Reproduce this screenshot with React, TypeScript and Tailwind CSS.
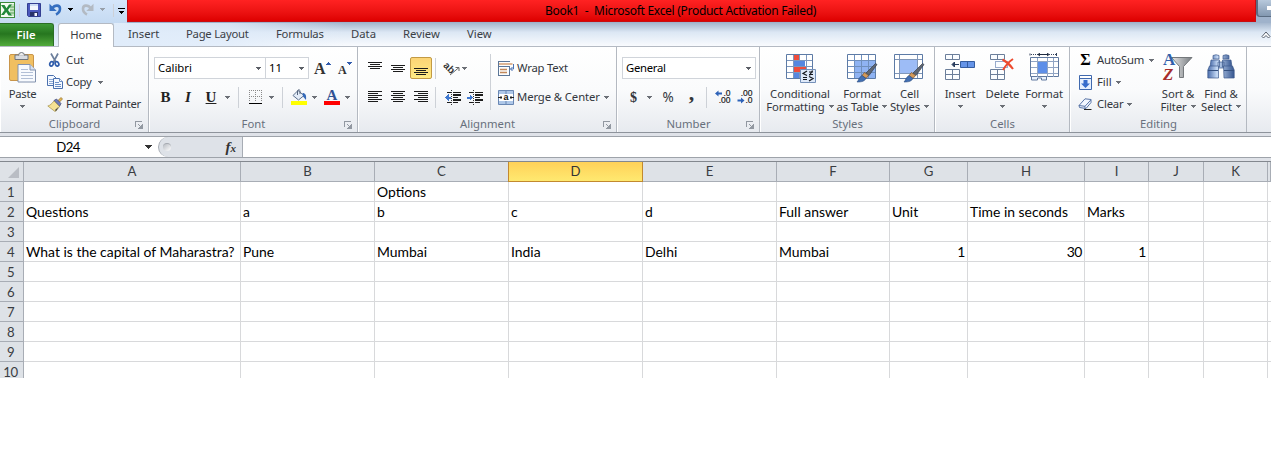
import React from "react";

type Box = { c?: string; children?: React.ReactNode };

function Arrow({ c = "" }: { c?: string }) {
  return (
    <svg className={`h-[3px] w-[5px] shrink-0 ${c}`} viewBox="0 0 5 3" fill="currentColor" shapeRendering="crispEdges">
      <path d="M0 0h5v1H4v1H3v1H2V2H1V1H0z" />
    </svg>
  );
}

function Launcher() {
  return (
    <svg className="h-2 w-2" viewBox="0 0 8 8" fill="none" stroke="#9298a1" shapeRendering="crispEdges">
      <path d="M.5 6V.5H7M3 3l3 3M7.5 3v4.5H3M6.500 4v3M4 6.500h3" />
    </svg>
  );
}

function Group({ w, label, launcher, children }: { w: string; label: string; launcher?: boolean; children: React.ReactNode }) {
  return (
    <section className={`flex h-[85px] shrink-0 flex-col border-r border-[#b4b9c1] ${w}`}>
      <div className="flex h-[69px] shrink-0 border-l border-white">{children}</div>
      <div className="grid h-4 grid-cols-[16px_1fr_16px] items-center border-l border-white text-[#68707c]">
        <span />
        <span className="text-center leading-4">{label}</span>
        <span className="flex items-center justify-center pt-px pr-[2px]">{launcher && <Launcher />}</span>
      </div>
    </section>
  );
}

function Sep({ c = "h-[21px]" }: { c?: string }) {
  return <span className={`w-px shrink-0 bg-[#cdd1d7] ${c}`} />;
}

function Big({ c, icon, lines, below }: { c: string; icon: React.ReactNode; lines: string[]; below?: boolean }) {
  return (
    <div className={`flex shrink-0 flex-col items-center pt-[7px] tracking-[-0.1px] whitespace-nowrap ${c}`}>
      <div className="flex h-[33px] items-start">{icon}</div>
      {lines.map((l, i) => (
        <div key={l} className="flex h-[13px] items-center leading-[13px]">
          {l}
          {!below && i === lines.length - 1 && <Arrow c="ml-1 text-[#6b6f76]" />}
        </div>
      ))}
      {below && <Arrow c="mt-[5px] text-[#6b6f76]" />}
    </div>
  );
}

function Slot({ c, children }: Box) {
  return <span className={`flex shrink-0 items-center justify-center ${c}`}>{children}</span>;
}

function Lines({ rows }: { rows: [number, number][] }) {
  return (
    <svg className="h-[14px] w-[15px]" viewBox="0 0 15 14" fill="#1c1c1c" shapeRendering="crispEdges">
      {rows.map(([x, w], i) => (
        <rect key={i} x={x} y={i * 2 + (rows.length > 5 ? 1 : 4)} width={w} height="1" />
      ))}
    </svg>
  );
}

const ExcelIcon = () => (
  <svg className="h-4 w-[15px]" viewBox="0 0 15 16">
    <rect x=".5" y=".5" width="14" height="15" fill="#f5fbf3" stroke="#3c8a3c" />
    <path d="M10 2h4v12h-4z" fill="#c8e3c5" />
    <path d="M10 5h4M10 8h4M10 11h4" stroke="#5ba55b" />
    <path d="M1 3h3.500l2 3.300L9 2.500h3L8 8l4 5.500H8.500L6.200 10 4 13H1l3.600-5z" fill="#21883a" />
  </svg>
);

const SaveIcon = () => (
  <svg className="h-[14px] w-[14px]" viewBox="0 0 14 14">
    <path d="M.5.500h13v13h-12l-1-1z" fill="#4b58bd" stroke="#333e91" />
    <path d="M3 1h8v6H3z" fill="#f2f6fd" />
    <path d="M3 1h8v2H3z" fill="#cddcf3" />
    <path d="M3 9h8v4H3z" fill="#283269" />
    <path d="M7.500 10h2.500v3H7.500z" fill="#f5f5ff" />
  </svg>
);

const UndoIcon = ({ c }: { c: string }) => (
  <svg className={`h-[13px] w-[13px] ${c}`} viewBox="0 0 13 13" fill="none" stroke="currentColor">
    <path d="M3 5.500C6 1.500 11 1.800 11 5.800c0 2.500-1.500 4.500-4 5.700" strokeWidth="2.600" />
    <path d="M.5.800v7.200h7.200z" fill="currentColor" stroke="none" />
  </svg>
);

const PasteIcon = () => (
  <svg className="-mt-[2px] h-[31px] w-[28px]" viewBox="0 0 28 31">
    <rect x=".5" y="2.500" width="24" height="26" rx="1.500" fill="#f0bf61" stroke="#c9954a" />
    <path d="M6 3h13v4.500H6z" fill="#d8dbe0" stroke="#6f747c" />
    <path d="M9.500 3.500a3 3 0 0 1 6 0" fill="#eee" stroke="#6f747c" />
    <path d="M9 12.500h12l5.500 5.500v12H9z" fill="#f7fafe" stroke="#8292ae" />
    <path d="M21 12.500v5.500h5.500" fill="#d5e0f1" stroke="#8292ae" />
    <path d="M12 17.500h7M12 20.500h12M12 23.500h12M12 26.500h12" stroke="#b1bfd6" />
  </svg>
);

const CutIcon = () => (
  <svg className="h-4 w-4" viewBox="0 0 16 16" fill="none">
    <path d="M4 1.500l4.800 8.500M11 1.500L6.500 10" stroke="#6c7f9c" strokeWidth="1.700" />
    <ellipse cx="4.500" cy="11.800" rx="1.700" ry="2.300" stroke="#2f5cab" strokeWidth="1.700" transform="rotate(25 4.500 11.800)" />
    <ellipse cx="10" cy="11.800" rx="1.700" ry="2.300" stroke="#2f5cab" strokeWidth="1.700" transform="rotate(-25 10 11.800)" />
  </svg>
);

const CopyIcon = () => (
  <svg className="h-[14px] w-4" viewBox="0 0 16 14" fill="#f5f9ff" stroke="#4a70ae">
    <path d="M.5.500h6l3 3v7h-9z" />
    <path d="M2 4.500h4M2 6.500h4M2 8.500h4" stroke="#8ca8d4" />
    <path d="M6.500 3.500h6l3 3v7h-9z" />
    <path d="M12.500 3.500v3h3M8 7.500h4M8 9.500h6M8 11.500h6" stroke="#6c8fc6" />
  </svg>
);

const BrushIcon = () => (
  <svg className="h-[15px] w-4" viewBox="0 0 16 15">
    <path d="M10.500 4L14 .500l1.500 1.500L12 5.500z" fill="#e9b84c" stroke="#8a6a2d" strokeWidth=".7" />
    <path d="M7 3.500l2.500-1.500 4.500 4.500-1.500 3z" fill="#6e7bb8" stroke="#3f466f" strokeWidth=".7" />
    <path d="M7 4l5.500 5.500C11 11.500 9.500 14 8 14.500L.8 9C3 8.500 5 6.500 7 4z" fill="#f5e294" stroke="#a28f4c" strokeWidth=".7" />
    <path d="M9 14.300l2.700-4.500L8 13z" fill="#444" />
  </svg>
);

const BorderIcon = () => (
  <svg className="h-[14px] w-[13px]" viewBox="0 0 13 14" fill="none" shapeRendering="crispEdges">
    <path d="M0 .5h13M0 6.500h13M.5 0v12M6.500 0v12M12.500 0v12" stroke="#8a8a8a" strokeDasharray="1 1" />
    <path d="M0 13h13" stroke="#000" strokeWidth="1" />
  </svg>
);

const FillIcon = () => (
  <svg className="h-4 w-4" viewBox="0 0 16 16">
    <path d="M7 1.500l6 5L7.500 11 2 6.500z" fill="#e3ecf8" stroke="#5e718e" />
    <path d="M6.500 6V1.500a1.500 1.500 0 0 1 2.500 0V5" fill="none" stroke="#56657d" />
    <path d="M11.500 4c3 0 4 2 3.500 7l-3-3.500z" fill="#3569b8" />
    <path d="M0 12h16v4H0z" fill="#ff0" />
  </svg>
);

const OrientIcon = () => (
  <svg className="h-[15px] w-[15px] overflow-visible" viewBox="0 0 15 15">
    <text x="-1" y="8" fontSize="10" fontWeight="700" fill="#333" fontFamily="Liberation Sans" transform="rotate(45 2 5)">ab</text>
    <path d="M5 14l9-7.500M14 10V6.500h-3.500" fill="none" stroke="#666" />
  </svg>
);

const IndentIcon = ({ out }: { out?: boolean }) => (
  <svg className="h-[15px] w-4" viewBox="0 0 16 15" shapeRendering="crispEdges">
    <path d="M2 2.500h4M8 2.500h8M2 12.500h4M8 12.500h5" stroke="#1c1c1c" />
    <path d="M8 5h8M8 7.500h5M8 10h8" stroke="#1c1c1c" strokeWidth="1.500" />
    <path d="M6.500 0v15" stroke="#333" strokeDasharray="1 1" />
    {out ? <path d="M0 7.500L3.500 4v2.500H6v2H3.500V11z" fill="#3f78cf" /> : <path d="M6 7.500L2.500 4v2.500H0v2h2.500V11z" fill="#3f78cf" />}
  </svg>
);

const WrapIcon = () => (
  <svg className="h-[15px] w-4" viewBox="0 0 16 15" fill="none" stroke="#5c7698">
    <path d="M0 .5h12M0 5.500h12M0 14.500h12M.5 0v15M11.500 5v10" />
    <path d="M1 3h13.500" stroke="#c2702e" />
    <path d="M2 8.500h7M2 11.500h7" stroke="#c2885a" strokeWidth="1.500" />
    <path d="M15.500 3v5h-3M14.500 6l-2 2 2 2" stroke="#4a72b2" />
  </svg>
);

const MergeIcon = () => (
  <svg className="h-[15px] w-4 overflow-visible" viewBox="0 0 16 15">
    <path d="M.5.500h15v14H.5z" fill="#aec7e8" stroke="#6987b3" />
    <path d="M8 0v15" stroke="#6987b3" />
    <path d="M1 4h14v7H1z" fill="#fff" />
    <path d="M0 7.500h4M12 7.500h4M3 6v3M13 6v3" stroke="#222" />
    <text x="8" y="10" textAnchor="middle" fontSize="9" fontWeight="700" fontFamily="Liberation Sans" fill="#111">a</text>
  </svg>
);

const DecimalIcon = ({ more }: { more?: boolean }) => (
  <svg className="h-[14px] w-4 overflow-visible" viewBox="0 0 16 14" fontFamily="Liberation Sans" fontSize="8.500" fill="#222">
    <text x="15.500" y="6" textAnchor="end" stroke="#222" strokeWidth=".2">{more ? ".0" : ".00"}</text>
    <text x="15.500" y="13" textAnchor="end" stroke="#222" strokeWidth=".2">{more ? ".00" : ".0"}</text>
    {more ? <path d="M0 3.500L3.500.500v2H7v2H3.500v2z" fill="#2d62b8" /> : <path d="M7.500 10.500L4 7.500v2H.5v2H4v2z" fill="#2d62b8" />}
  </svg>
);

const CondIcon = () => (
  <svg className="h-[29px] w-[31px]" viewBox="0 0 31 29">
    <path d="M1.500.500h26v24h-26z" fill="#fff" stroke="#5d7ba6" />
    <path d="M8 1h7v5H8zM8 13h13v5H8z" fill="#ee4d3c" />
    <path d="M8 7h12v5H8zM8 19h7v5H8z" fill="#5687e0" />
    <path d="M2 6.500h25M2 12.500h25M2 18.500h25M8.500 1v23M14.500 1v5M14.500 18v6M21.500 1v23" stroke="#7d97bd" />
    <path d="M15.500 15.500h15v13h-15z" fill="#dfeafa" stroke="#7590b8" />
    <path d="M22 17l-4 2.500 4 2M18 23.500h4M18 25.500h4M24 18h4M24 20.500h4M27.500 16.500l-3 5M24 22.500l4 2-4 2.500" fill="none" stroke="#15181d" strokeWidth="1.200" />
  </svg>
);

const Paintbrush = () => (
  <g>
    <path d="M28.500 9.500l1.500 1-8 11-3-2.500z" fill="#5e6673" stroke="#3a414c" strokeWidth=".7" />
    <path d="M17.500 18.500l4 3-2.500 3-4-3z" fill="#d49a5a" stroke="#76502a" strokeWidth=".7" />
    <path d="M15 21.500l4 3c-2 3.500-6 3.500-9 3.500 2-2 2-5 5-6.500z" fill="#426fb2" stroke="#2c4c80" strokeWidth=".6" />
  </g>
);

const TableIcon = () => (
  <svg className="h-[29px] w-[31px]" viewBox="0 0 31 29">
    <path d="M.5.500h28v24H.5z" fill="#fff" stroke="#5d7ba6" />
    <path d="M8 6h20v18H8z" fill="#8fb3f3" />
    <path d="M1 6.500h27M1 12.500h27M1 18.500h27M7.500 1v23M14.500 1v23M21.500 1v23" stroke="#6f8fbd" />
    <Paintbrush />
  </svg>
);

const CellStyleIcon = () => (
  <svg className="h-[29px] w-[31px]" viewBox="0 0 31 29">
    <path d="M.5.500h28v24H.5z" fill="#fff" stroke="#5d7ba6" />
    <path d="M6 6h18v13H6z" fill="#9dbcf6" />
    <path d="M1 5.500h27M1 19.500h27M5.500 1v23M23.500 1v23" stroke="#8096b8" />
    <Paintbrush />
  </svg>
);

const InsertIcon = () => (
  <svg className="h-[27px] w-[31px]" viewBox="0 0 31 27" fill="#fbfdff" stroke="#6b7e9a">
    <path d="M.5.500h14v5H.5zM7.500.500v5M.5 15.500h14v10H.5zM7.500 15.500v10M.5 20.500h14" />
    <path d="M15.500 7.500h14v6h-14z" fill="#6594e8" stroke="#355d9f" />
    <path d="M22.500 7.500v6" stroke="#355d9f" />
    <path d="M14 10.500H8M9.500 8L7 10.500 9.500 13z" fill="#293d5e" stroke="#293d5e" />
  </svg>
);

const DeleteIcon = () => (
  <svg className="h-[27px] w-[25px]" viewBox="0 0 25 27" fill="#fbfdff" stroke="#6b7e9a">
    <path d="M.5.500h14v5H.5zM7.500.500v5M.5 15.500h14v10H.5zM7.500 15.500v10M.5 20.500h14" />
    <path d="M5.500 7.500h12v6h-12z" stroke="#34589b" strokeDasharray="1 1" />
    <path d="M12.500 5.500Q19 9 23 15M23 5Q17 9 13 16" fill="none" stroke="#ed4a2e" strokeWidth="2" />
  </svg>
);

const FormatIcon = () => (
  <svg className="-mt-px h-[29px] w-[31px]" viewBox="0 0 31 29" fill="none">
    <path d="M1.500 4.500h28v19h-28z" fill="#fff" stroke="#60799f" />
    <path d="M9 9h9v11H9z" fill="#5e8fe8" />
    <path d="M2 8.500h27M2 20.500h27M8.500 5v19M18.500 5v19M24.500 5v19M2 14.500h7M18 14.500h11" stroke="#91a5c4" />
    <path d="M1 .500v2M27.500 0v3" stroke="#34435c" />
    <path d="M2 1.500h7M20 1.500h7" stroke="#34435c" strokeDasharray="1 1" />
    <path d="M9 1.500h10M11 0L9 1.500 11 3M18 0l2 1.500L18 3" stroke="#1e2b40" />
    <path d="M2.500 24v3h6v-2h4v2h5v-3" fill="#e9f1fc" stroke="#60799f" />
  </svg>
);

const DownIcon = () => (
  <svg className="h-[15px] w-[13px]" viewBox="0 0 13 15">
    <path d="M.5.500h12v14H.5z" fill="#e5effd" stroke="#4069ae" />
    <path d="M1 1h11v3H1z" fill="#fff" />
    <path d="M1 3.500h11" stroke="#4069ae" />
    <path d="M4.500 5h4v3.500H11L6.500 13 2 8.500h2.500z" fill="#366ccb" />
  </svg>
);

const EraserIcon = () => (
  <svg className="h-3 w-[14px]" viewBox="0 0 14 12">
    <path d="M1 7.500L7 .800l6 .7v3L8 10.500 1.500 9.500z" fill="#f3f7ff" stroke="#5874a6" />
    <path d="M1 7.500l6 .800 6-6.500M7 8.300v2" fill="none" stroke="#5874a6" />
    <path d="M6 11.500h7.500" stroke="#222" />
  </svg>
);

const SortIcon = () => (
  <svg className="-mt-[2px] h-[29px] w-[30px] overflow-visible" viewBox="0 0 30 29">
    <defs>
      <linearGradient id="funnel"><stop stopColor="#e6e6e6" /><stop offset="1" stopColor="#777c81" /></linearGradient>
    </defs>
    <path d="M8.500 5.500h20.500l-8.500 9v11h-4v-11z" fill="url(#funnel)" stroke="#74787c" />
    <text x="0" y="13" fontSize="17" fontWeight="700" fontFamily="Liberation Serif" fill="#315faa">A</text>
    <text x="0" y="28" fontSize="17" fontWeight="700" fontStyle="italic" fontFamily="Liberation Serif" fill="#a62c2c">Z</text>
  </svg>
);

const BinocularsIcon = () => (
  <svg className="h-[26px] w-[28px]" viewBox="0 0 28 26">
    <defs>
      <linearGradient id="lens"><stop stopColor="#4a6dab" /><stop offset=".35" stopColor="#c7dbf6" /><stop offset="1" stopColor="#35558f" /></linearGradient>
    </defs>
    <g fill="url(#lens)" stroke="#3d5a8c" strokeWidth=".7">
      <path d="M6 1.500Q9 0 12 1.500V5H6zM16 1.500Q19 0 22 1.500V5h-6zM4 6h8.500v7H3zM15.500 6H24l1 7h-9.500zM11 8h6v6h-6z" />
      <path d="M2.500 12h9v12H.8v-8zM16.500 12h9l1.700 4v8H17z" />
    </g>
    <path d="M1 16.500h10M17 16.500h10" stroke="#34507f" />
  </svg>
);

const TABS = [
  { t: "Insert", c: "ml-[14px] w-[58px]" },
  { t: "Page Layout", c: "w-[90px] tracking-[-0.25px]" },
  { t: "Formulas", c: "w-[75px] tracking-[-0.25px]" },
  { t: "Data", c: "w-[52px]" },
  { t: "Review", c: "w-[64px]" },
  { t: "View", c: "w-[40px]" },
];

const COLS = ["A", "B", "C", "D", "E", "F", "G", "H", "I", "J", "K", ""];
const GRID = "grid w-[1271px] grid-cols-[24px_217px_134px_134px_134px_134px_113px_78px_117px_64px_55px_64px_3px]";
const ROWS: string[][] = [
  ["", "", "Options"],
  ["Questions", "a", "b", "c", "d", "Full answer", "Unit", "Time in seconds", "Marks"],
  [],
  ["What is the capital of Maharastra?", "Pune", "Mumbai", "India", "Delhi", "Mumbai", "1", "30", "1"],
  [], [], [], [], [], [],
];

function TitleBar() {
  return (
    <header className="flex h-[23px] bg-[#9fb2cb]">
      <div className="flex w-[127px] shrink-0 items-start bg-linear-to-b from-[#d5e6fa] to-[#c5daf2] pt-[2px]">
        <ExcelIcon />
        <Sep c="ml-1 mt-[2px] h-[13px] bg-[#8a94a3]" />
        <span className="ml-[7px] pt-[1px]"><SaveIcon /></span>
        <span className="ml-[8px] pt-[1px] text-[#356fc0]"><UndoIcon c="" /></span>
        <Arrow c="ml-[6px] mt-[6px] text-black" />
        <span className="ml-[8px] pt-[1px] text-[#b3bac3]"><UndoIcon c="-scale-x-100" /></span>
        <Arrow c="ml-[6px] mt-[6px] text-[#98a0aa]" />
        <Sep c="ml-[8px] mt-[2px] h-[13px] bg-[#8a94a3]" />
        <span className="ml-[4px] mt-[6px] flex flex-col items-center gap-[2px] text-black">
          <span className="h-px w-[7px] bg-black" />
          <Arrow />
        </span>
      </div>
      <div className="flex h-[22px] w-[1129px] shrink-0 items-center border-x border-b border-[#c80d12] bg-linear-to-b from-[#ff2222] to-[#de0000] pl-[417px] text-[12px] whitespace-pre text-black">
        <span className="tracking-[-0.29px]">Book1  -  Microsoft Excel (Product Activation Failed)</span>
      </div>
      <div className="flex h-[17px] w-[15px] items-center justify-end rounded-bl border-b border-l-2 border-[#5a6c82] bg-linear-to-b from-[#b8c9dc] to-[#8398b1]">
        <span className="h-1 w-1 bg-white" />
      </div>
    </header>
  );
}

function TabBar() {
  return (
    <nav className="flex h-[24px] border-b border-[#b4bac3] bg-linear-to-b from-[#a5b7ce] via-[#dce7f4] via-40% to-[#f9fbfe] text-[#3b3f46]">
      <div className="flex w-[114px] shrink-0 bg-linear-to-b from-[#cfe1f6] to-[#e7f1fc]">
        <div className="flex h-[23px] w-[54px] items-center justify-center rounded-tr-[3px] border-t border-r border-[#2b6e26] bg-linear-to-b from-[#3f9a38] via-[#26761f] via-45% to-[#52ab3c] pr-[1px] font-semibold text-white">File</div>
        <div className="ml-[4px] flex h-[24px] w-[56px] items-center justify-center rounded-t-[3px] border border-b-0 border-[#b4bac3] bg-white tracking-[-0.2px]">Home</div>
      </div>
      <div className="flex h-[23px] flex-1 items-center bg-linear-to-r from-[#e0ecfa] from-0% via-[#e0ecfa]/80 via-10% to-transparent to-20%">
        {TABS.map((x) => (
          <span key={x.t} className={`shrink-0 whitespace-nowrap ${x.c}`}>{x.t}</span>
        ))}
        <svg className="ml-auto h-2 w-[10px]" viewBox="0 0 10 8" fill="#fff" stroke="#555e6c">
          <path d="M1 5.500L5 1l4 4.500-1.500 1.500L5 4.500 2.500 7z" />
        </svg>
      </div>
    </nav>
  );
}

function Ribbon() {
  return (
    <div className="flex h-[85px] bg-linear-to-b from-white via-[#fafbfc] via-50% to-[#e7eaef] text-[#33373d]">
      <Group w="w-[149px]" label="Clipboard" launcher>
        <Big c="w-[43px] tracking-[-0.3px]" icon={<PasteIcon />} lines={["Paste"]} below />
        <div className="flex flex-col pt-[2px] pl-[3px] whitespace-nowrap">
          <div className="flex h-[22px] items-center gap-[3px]"><CutIcon />Cut</div>
          <div className="flex h-[22px] items-center gap-[3px]"><CopyIcon /><span className="tracking-[-0.2px]">Copy</span><Arrow c="ml-[3px] text-[#6b6f76]" /></div>
          <div className="flex h-[22px] items-center gap-[3px]"><BrushIcon /><span className="tracking-[-0.33px]">Format Painter</span></div>
        </div>
      </Group>

      <Group w="w-[209px]" label="Font" launcher>
        <div className="flex flex-col pt-[10px] pl-[4px]">
          <div className="flex h-[22px]">
            <div className="flex w-[112px] items-center justify-between border border-[#d0d4da] bg-white pr-1 pl-[3px] text-black">Calibri<Arrow c="text-[#5b5f66]" /></div>
            <div className="flex w-[43px] items-center justify-between border border-l-0 border-[#d0d4da] bg-white pr-1 pl-[3px] text-black">11<Arrow c="text-[#5b5f66]" /></div>
            <div className="flex w-[25px] items-center pt-[2px] pl-[5px] font-['Liberation_Serif'] text-[16px] font-bold text-[#333]">A<Arrow c="-mt-[12px] rotate-180 text-[#315bad]" /></div>
            <div className="flex w-[20px] items-center pt-[3px] pl-[4px] font-['Liberation_Serif'] text-[12px] font-bold text-[#333]">A<Arrow c="-mt-[12px] text-[#315bad]" /></div>
          </div>
          <div className="mt-[7px] flex h-[22px] items-center font-['Liberation_Serif'] text-[15px] text-[#222]">
            <Slot c="w-[23px] font-bold">B</Slot>
            <Slot c="w-[22px] font-bold italic">I</Slot>
            <Slot c="w-[24px] font-bold underline">U</Slot>
            <Arrow c="ml-[2px] text-[#6b6f76]" />
            <Sep c="ml-[8px] h-[21px]" />
            <span className="ml-[10px]"><BorderIcon /></span>
            <Arrow c="ml-[7px] text-[#6b6f76]" />
            <Sep c="ml-[8px] h-[21px]" />
            <span className="ml-[8px]"><FillIcon /></span>
            <Arrow c="ml-[5px] text-[#6b6f76]" />
            <span className="ml-[7px] flex h-4 w-4 flex-col items-center justify-end border-b-4 border-[#f00] text-[15px] leading-[12px] font-bold text-[#315293]">A</span>
            <Arrow c="ml-[5px] text-[#6b6f76]" />
          </div>
        </div>
      </Group>

      <Group w="w-[259px]" label="Alignment" launcher>
        <div className="flex w-[131px] shrink-0 flex-col pt-[10px] pl-[5px]">
          <div className="flex h-[22px] items-center">
            <Slot c="w-[23px] pb-[7px]"><Lines rows={[[0, 14], [2, 10], [0, 14], [2, 10]]} /></Slot>
            <Slot c="w-[23px]"><Lines rows={[[0, 14], [2, 10], [0, 14], [2, 10]]} /></Slot>
            <span className="flex h-[22px] w-[22px] items-end justify-center rounded-[2px] border border-[#c29a45] bg-linear-to-b from-[#fcd476] to-[#ffeb83]"><Lines rows={[[0, 14], [2, 10], [0, 14], [2, 10]]} /></span>
            <Sep c="ml-[3px] h-[21px]" />
            <span className="ml-[9px]"><OrientIcon /></span>
            <Arrow c="ml-[2px] text-[#6b6f76]" />
          </div>
          <div className="mt-[7px] flex h-[22px] items-center">
            <Slot c="w-[23px]"><Lines rows={[[0, 14], [0, 10], [0, 14], [0, 10], [0, 14], [0, 10]]} /></Slot>
            <Slot c="w-[23px]"><Lines rows={[[0, 14], [2, 10], [0, 14], [2, 10], [0, 14], [2, 10]]} /></Slot>
            <Slot c="w-[22px]"><Lines rows={[[0, 14], [4, 10], [0, 14], [4, 10], [0, 14], [4, 10]]} /></Slot>
            <Sep c="ml-[3px] h-[21px]" />
            <span className="ml-[9px]"><IndentIcon out /></span>
            <span className="ml-[6px]"><IndentIcon /></span>
          </div>
        </div>
        <Sep c="mt-[7px] h-[56px]" />
        <div className="flex flex-col pt-[10px] pl-[7px] whitespace-nowrap">
          <div className="flex h-[22px] items-center gap-[3px]"><WrapIcon /><span className="tracking-[-0.2px]">Wrap Text</span></div>
          <div className="mt-[7px] flex h-[22px] items-center gap-[3px]"><MergeIcon /><span className="tracking-[-0.1px]">Merge &amp; Center</span><Arrow c="ml-[1px] text-[#6b6f76]" /></div>
        </div>
      </Group>

      <Group w="w-[143px]" label="Number" launcher>
        <div className="flex flex-col pt-[10px] pl-[4px]">
          <div className="flex h-[22px] w-[134px] items-center justify-between border border-[#d0d4da] bg-white pr-1 pl-[3px] tracking-[-0.3px] text-black">General<Arrow c="text-[#5b5f66]" /></div>
          <div className="mt-[7px] flex h-[22px] items-center">
            <Slot c="w-[23px] font-['Liberation_Serif'] text-[14px] font-bold">$</Slot>
            <Arrow c="ml-[2px] text-[#6b6f76]" />
            <Slot c="ml-[4px] w-[24px] text-[13.5px]">%</Slot>
            <Slot c="w-[23px] pb-[10px] font-['Liberation_Serif'] text-[22px] font-bold">,</Slot>
            <Sep c="ml-[3px] h-[21px]" />
            <span className="ml-[8px]"><DecimalIcon more /></span>
            <span className="ml-[6px]"><DecimalIcon /></span>
          </div>
        </div>
      </Group>

      <Group w="w-[175px]" label="Styles">
        <Big c="w-[78px]" icon={<CondIcon />} lines={["Conditional", "Formatting"]} />
        <Big c="w-[46px]" icon={<TableIcon />} lines={["Format", "as Table"]} />
        <Big c="w-[49px]" icon={<CellStyleIcon />} lines={["Cell", "Styles"]} />
      </Group>

      <Group w="w-[135px]" label="Cells">
        <Big c="w-[48px]" icon={<InsertIcon />} lines={["Insert"]} below />
        <Big c="w-[37px]" icon={<DeleteIcon />} lines={["Delete"]} below />
        <Big c="w-[46px]" icon={<FormatIcon />} lines={["Format"]} below />
      </Group>

      <Group w="w-[177px]" label="Editing">
        <div className="flex w-[85px] shrink-0 flex-col pt-[2px] pl-[7px] whitespace-nowrap">
          <div className="flex h-[22px] items-center"><Slot c="mr-[4px] w-[15px] font-['Liberation_Serif'] text-[16px] font-bold text-black">Σ</Slot><span className="tracking-[-0.25px]">AutoSum</span><Arrow c="ml-[5px] text-[#6b6f76]" /></div>
          <div className="flex h-[22px] items-center"><Slot c="mr-[4px] w-[15px] pr-px"><DownIcon /></Slot>Fill<Arrow c="ml-[4px] text-[#6b6f76]" /></div>
          <div className="flex h-[22px] items-center"><Slot c="mr-[4px] w-[15px] pr-px"><EraserIcon /></Slot><span className="tracking-[-0.2px]">Clear</span><Arrow c="ml-[4px] text-[#6b6f76]" /></div>
        </div>
        <Big c="w-[44px]" icon={<SortIcon />} lines={["Sort &", "Filter"]} />
        <Big c="w-[42px]" icon={<BinocularsIcon />} lines={["Find &", "Select"]} />
      </Group>
    </div>
  );
}

function FormulaBar() {
  return (
    <div className="mt-[3px] flex h-[22px] border-y border-[#9ea3aa] bg-white">
      <div className="flex w-[158px] shrink-0 items-center justify-end pr-[6px] font-['Lato'] text-[13.2px] text-black">
        <span className="mr-[65px] pt-px tracking-[-0.5px]">D24</span>
        <svg className="h-1 w-[7px]" viewBox="0 0 7 4" shapeRendering="crispEdges"><path d="M0 0h7L3.500 4z" fill="#333" /></svg>
      </div>
      <div className="flex w-[85px] shrink-0 items-center justify-between rounded-l-full border-r border-l border-[#a7acb4] bg-[#dee2e8] pr-[6px] pl-[4px]">
        <span className="h-2 w-2 rounded-full border-t border-[#a4a8af] bg-linear-to-br from-[#b8bcc3] to-white" />
        <span className="font-['Liberation_Serif'] text-[15px] leading-none font-bold text-[#333] italic">f<span className="text-[11px]">x</span></span>
      </div>
    </div>
  );
}

function Sheet() {
  return (
    <main className="h-[217px] overflow-hidden font-['Lato'] text-[13.93px] text-black">
      <div className={`${GRID} h-[21px] grid-rows-[20px] border-t border-[#83888f] text-[13.2px] leading-none`}>
        <div className="flex items-end justify-end border-r border-b border-[#a8adb5] bg-[#dee2e7] pr-[4px] pb-[3px]">
          <svg className="h-[11px] w-[11px]" viewBox="0 0 11 11"><path d="M11 0v11H0z" fill="#b9bdc4" /></svg>
        </div>
        {COLS.map((c, i) => (
          <div
            key={i}
            className={
              c === "D"
                ? "-ml-px flex items-center justify-center border border-t-0 border-[#c2892f] bg-linear-to-b from-[#ffd158] to-[#fee970] pt-px text-[#333]"
                : "flex items-center justify-center border-r border-b border-[#a8adb5] bg-[#dee2e7] pt-px text-[#3a3d42]"
            }
          >
            {c}
          </div>
        ))}
      </div>
      {ROWS.map((r, y) => (
        <div key={y} className={`${GRID} h-[20px] leading-[20px]`}>
          <div className="h-[20px] border-r border-b border-[#a8adb5] bg-[#dee2e7] pr-[2px] text-center text-[13.2px] tracking-[-0.4px] text-[#3a3d42]">{y + 1}</div>
          {COLS.map((_, x) => (
            <div key={x} className={`h-[20px] border-r border-b border-[#d8d9db] px-[2px] whitespace-nowrap ${/^\d+$/.test(r[x] ?? "") ? "text-right tracking-[-0.4px]" : ""}`}>{r[x] ?? ""}</div>
          ))}
        </div>
      ))}
    </main>
  );
}

export default function App() {
  return (
    <div className="h-[460px] w-[1271px] overflow-hidden bg-white font-['Noto_Sans',sans-serif] text-[11.3px]">
      <TitleBar />
      <TabBar />
      <Ribbon />
      <div className="border-t border-[#8e939b] bg-[#dfe2e8] pb-[3px]">
        <FormulaBar />
      </div>
      <Sheet />
    </div>
  );
}
